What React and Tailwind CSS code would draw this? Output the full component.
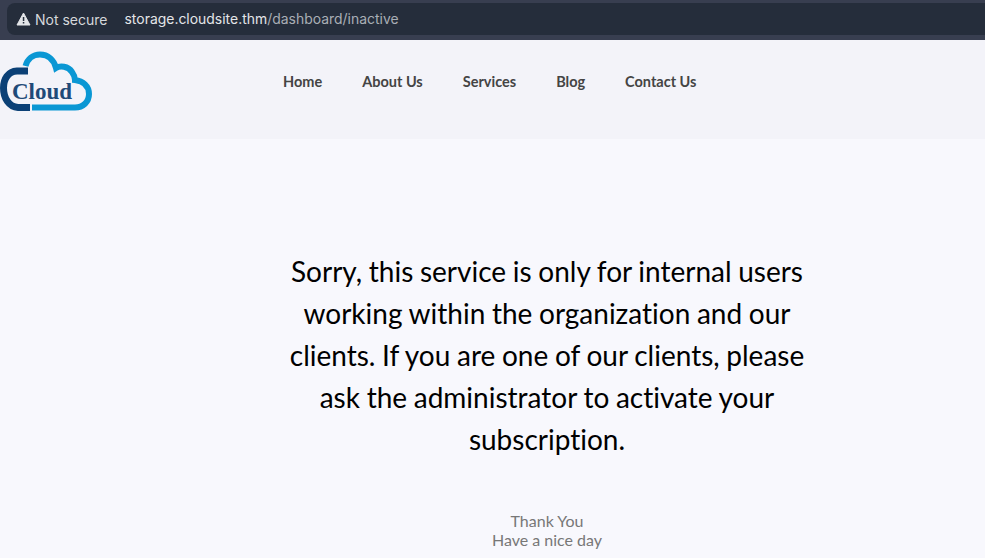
import React from "react";

function Logo() {
  return (
    <svg width="93" height="60" viewBox="0 0 93 60" className="block">
      {/* light blue cloud outline */}
      <path
        d="M25.5 15 C27.5 8 33 3.5 40 3.5 C48 3.5 54 9 56 17 C60 14.5 68 15 72 21 C74.5 24.5 75 27 75 29 C83 30 89 35 89 43 C89 51 83 56.5 75 56.5 L32 56.5"
        fill="none"
        stroke="#0a97d4"
        strokeWidth="6"
      />
      {/* dark blue left arc */}
      <path
        d="M28 20 L17 20 C8 20.5 3.5 28 3.5 37 C3.5 47 9 56 18 56.5 L30 56.5"
        fill="none"
        stroke="#0b4076"
        strokeWidth="7"
      />
      <text
        x="12"
        y="47.5"
        fontFamily="'Liberation Serif', serif"
        fontSize="23"
        fontWeight="700"
        fill="#1f4a78"
      >
        Cloud
      </text>
    </svg>
  );
}

export default function App() {
  const links = ["Home", "About Us", "Services", "Blog", "Contact Us"];

  return (
    <div className="h-[558px] w-[985px] overflow-hidden bg-[#f8f8fd] font-['Lato',sans-serif] [font-variant-ligatures:none]">
      {/* browser url bar */}
      <div className="h-10 bg-[#383e50] pt-[3px] pl-[7px]">
        <div className="flex h-[32px] items-center rounded-l-lg bg-[#252d3b] pl-[9px] font-['Inter',sans-serif] text-[14px] text-[#d6d8dc]">
          <svg width="15" height="14" viewBox="0 0 15 14" className="mr-1">
            <path d="M7.5 1 L14 13 L1 13 Z" fill="#e3e5e8" stroke="#e3e5e8" strokeLinejoin="round" />
            <rect x="6.8" y="5" width="1.5" height="4" fill="#252d3b" />
            <rect x="6.8" y="10" width="1.5" height="1.5" fill="#252d3b" />
          </svg>
          <span>Not secure</span>
          <span className="ml-[17px] text-[13.95px] text-[#e3e5e8]">storage.cloudsite.thm</span>
          <span className="text-[13.95px] text-[#a9adb5]">/dashboard/inactive</span>
        </div>
      </div>

      {/* site header */}
      <header className="flex h-[99px] bg-[#f3f3f9]">
        <div className="w-[283px] pt-[11px]">
          <Logo />
        </div>
        <nav className="flex items-start gap-10 pt-[33px]">
          {links.map((link) => (
            <a key={link} href="#" className="text-[14.5px] leading-[18px] font-bold text-[#444444]">
              {link}
            </a>
          ))}
        </nav>
      </header>

      {/* message */}
      <main className="flex flex-col items-center pl-[109px] pt-[111px]">
        <p className="w-[520px] text-center text-[28px] leading-[42px] text-black [word-spacing:-0.5px]">
          Sorry, this service is only for internal users working within the organization and our clients. If you are one of our clients, please ask the administrator to activate your subscription.
        </p>
        <div className="mt-[51px] text-center text-base leading-[19px] text-[#777777]">
          <p>Thank You</p>
          <p>Have a nice day</p>
        </div>
      </main>
    </div>
  );
}
